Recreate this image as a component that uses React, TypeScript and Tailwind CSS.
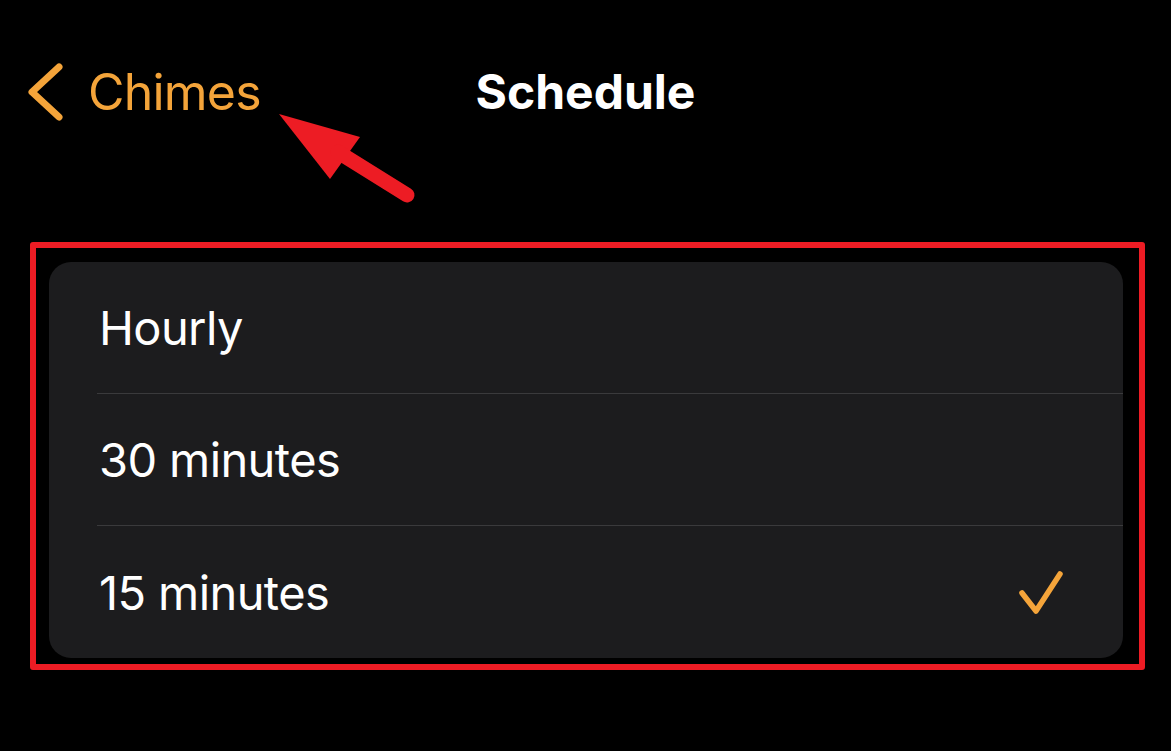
const orange = "#f4a43a";

function Chevron() {
  return (
    <svg width="40" height="60" viewBox="0 0 40 60" className="shrink-0">
      <path
        d="M32 5 L5 30 L32 55"
        fill="none"
        stroke={orange}
        strokeWidth="7"
        strokeLinecap="round"
        strokeLinejoin="round"
      />
    </svg>
  );
}

function Check() {
  return (
    <svg width="48" height="47" viewBox="0 0 48 47" className="shrink-0">
      <path
        d="M5 24 L19 42 L43 5"
        fill="none"
        stroke={orange}
        strokeWidth="5.5"
        strokeLinecap="round"
        strokeLinejoin="round"
      />
    </svg>
  );
}

function Row({ label, checked, last }: { label: string; checked?: boolean; last?: boolean }) {
  return (
    <div
      className={`ml-[48px] flex h-[132px] items-center justify-between pr-[58px] ${
        last ? "" : "border-b border-[#3a3a3c]"
      }`}
    >
      <span className="pl-[2px] text-[47px] leading-none tracking-[-0.6px] text-white">{label}</span>
      {checked && <Check />}
    </div>
  );
}

export default function App() {
  return (
    <div
      className="relative h-[751px] w-[1171px] overflow-hidden bg-black"
      style={{ fontFamily: "Inter, 'Noto Sans', sans-serif" }}
    >
      {/* nav bar */}
      <div className="grid h-[242px] grid-cols-[1fr_auto_1fr] items-start pt-[62px]">
        <div className="flex items-center pl-[27px]">
          <Chevron />
          <span className="ml-[21px] text-[50px] leading-[60px] tracking-[-0.8px] text-[#f4a43a]">Chimes</span>
        </div>
        <div className="text-[48px] font-bold leading-[60px] text-white">Schedule</div>
        <div />
      </div>

      {/* highlighted list */}
      <div className="ml-[30px] h-[428px] w-[1115px] rounded-[3px] border-[6px] border-[#ed1c24] pl-[13px] pr-[16px] pt-[14px] pb-[6px]">
        <div className="h-full rounded-[22px] bg-[#1c1c1e]">
          <Row label="Hourly" />
          <Row label="30 minutes" />
          <Row label="15 minutes" checked last />
        </div>
      </div>

      {/* annotation arrow */}
      <svg
        className="pointer-events-none absolute left-0 top-0"
        width="1171"
        height="751"
        viewBox="0 0 1171 751"
      >
        <polygon points="279,114 360,137 330,179" fill="#ed1c24" />
        <line
          x1="338"
          y1="152"
          x2="407"
          y2="195"
          stroke="#ed1c24"
          strokeWidth="15"
          strokeLinecap="round"
        />
      </svg>
    </div>
  );
}
